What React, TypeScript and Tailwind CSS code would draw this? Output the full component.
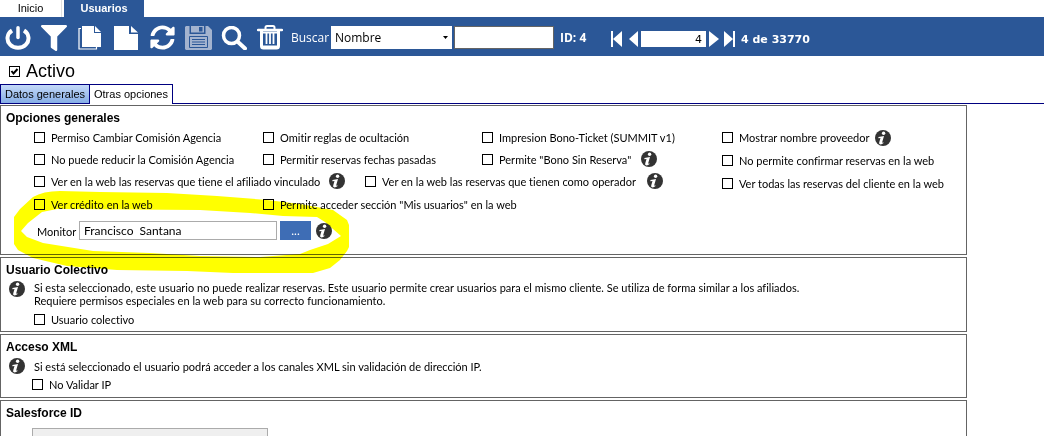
import React, { useId, useState } from 'react';
import { FaFilter, FaSyncAlt } from 'react-icons/fa';

function PowerIcon() {
  return (
    <svg width="26" height="24" viewBox="0 0 26 24" fill="none" stroke="currentColor">
      <path d="M7 4.500a10.500 9.500 0 1 0 12 0" strokeWidth="4" />
      <path d="M13 1.800v9.700" strokeWidth="3.500" strokeLinecap="round" />
    </svg>
  );
}

function CopyIcon() {
  return (
    <svg width="24" height="24" viewBox="0 0 24 24" fill="currentColor">
      <path d="M4 0h12v7h7v14H4z" />
      <path d="M17 0l6 6h-6z" />
      <path d="M3 2.500H1V23h17.500v-2" fill="none" stroke="currentColor" strokeWidth="1.200" />
    </svg>
  );
}

function FileIcon() {
  return (
    <svg width="24" height="24" viewBox="0 0 24 24" fill="currentColor">
      <path d="M0 0h15v8h9v16H0z" />
      <path d="M17 0l7 6.500h-7z" />
    </svg>
  );
}

function SaveIcon() {
  return (
    <svg width="27" height="24" viewBox="0 0 27 24" fill="currentColor">
      <path d="M1 0h3.500v8h16V0H23l4 4v19l-1 1H1l-1-1V1z" />
      <path fillRule="evenodd" d="M6 0h13v6.500H6zM14 1v4.500h3.500V1z" />
      <path
        d="M4.500 10.500h18v11h-18zM7 13.500h13M7 16h13M7 18.500h13"
        fill="none"
        stroke="#2b5797"
        strokeWidth="1"
      />
    </svg>
  );
}

function SearchIcon() {
  return (
    <svg width="26" height="24" viewBox="0 0 26 24" fill="none" stroke="currentColor">
      <circle cx="10.500" cy="9.500" r="8" strokeWidth="3.500" />
      <path d="M17 16l7 6.500" strokeWidth="4" strokeLinecap="round" />
    </svg>
  );
}

function TrashIcon() {
  return (
    <svg width="26" height="25" viewBox="0 0 26 25" fill="none" stroke="currentColor">
      <path d="M8.500 4V2.500Q8.500 1 10 1h6q1.500 0 1.500 1.500V4" strokeWidth="2" />
      <path d="M1 5h24" strokeWidth="2.500" strokeLinecap="round" />
      <path d="M4.500 6v15q0 2 2 2h13q2 0 2-2V6" strokeWidth="3" />
      <path d="M5 7.500h16" strokeWidth="2" />
      <path d="M9.500 8v11M13 8v11M16.500 8v11" strokeWidth="1.800" />
      <path d="M5 22h16" strokeWidth="3" />
    </svg>
  );
}

function InfoIcon() {
  return (
    <svg width="16" height="16" viewBox="0 0 16 16" className="shrink-0">
      <circle cx="8" cy="8" r="8" fill="#333" />
      <circle cx="8.600" cy="3.200" r="1.700" fill="#fff" />
      <path d="M3.500 7L9 6 7.200 12.300q-.2.900 1.300 0l-.2 1q-1.800 1.500-3.300 1-1.200-.3-.8-1.800l1.300-4.400-2.200.1z" fill="#fff" />
    </svg>
  );
}

type CheckProps = {
  label: string;
  initial?: boolean;
  large?: boolean;
};

function Check({ label, initial = false, large = false }: CheckProps) {
  const id = useId();
  const [checked, setChecked] = useState(initial);

  return (
    <div className="flex items-center gap-[6px]">
      <span className="relative flex shrink-0">
        <input
          id={id}
          type="checkbox"
          checked={checked}
          onChange={e => setChecked(e.target.checked)}
          className="h-[11px] w-[11px] shrink-0 appearance-none border border-black bg-white"
        />
        {checked && (
          <svg width="11" height="11" viewBox="0 0 11 11" className="pointer-events-none absolute inset-0">
            <path d="M2.500 5l2 2.500L8.500 3" fill="none" stroke="#000" strokeWidth="2" />
          </svg>
        )}
      </span>
      <label
        htmlFor={id}
        className={large ? "font-['Liberation_Sans',Arial,sans-serif] text-[18px] leading-5" : 'whitespace-nowrap'}
      >
        {label}
      </label>
    </div>
  );
}

type PanelProps = {
  title: string;
  children: React.ReactNode;
};

function Panel({ title, children }: PanelProps) {
  return (
    <section className="border border-[#646464]">
      <h2 className="pt-1 pl-[5px] font-['Liberation_Sans',Arial,sans-serif] text-[12px] leading-4 font-bold">
        {title}
      </h2>
      {children}
    </section>
  );
}

const tools = [
  { name: 'Salir', icon: <PowerIcon /> },
  { name: 'Filtrar', icon: <FaFilter size={26} /> },
  { name: 'Copiar', icon: <CopyIcon /> },
  { name: 'Nuevo', icon: <FileIcon /> },
  { name: 'Actualizar', icon: <FaSyncAlt size={25} /> },
  { name: 'Guardar', icon: <SaveIcon />, disabled: true },
  { name: 'Buscar', icon: <SearchIcon /> },
  { name: 'Eliminar', icon: <TrashIcon /> },
];

function Toolbar() {
  return (
    <div className="flex h-[39px] items-center bg-[#2b5797] pt-[2px] font-['Open_Sans',sans-serif] text-[12px] text-white">
      {tools.map(tool => (
        <button
          key={tool.name}
          type="button"
          aria-label={tool.name}
          disabled={tool.disabled}
          className="flex h-full w-9 items-center justify-center disabled:text-[#a3b3cf]"
        >
          {tool.icon}
        </button>
      ))}
      <label htmlFor="campo" className="ml-[3px] w-10">Buscar</label>
      <div className="relative">
        <select
          id="campo"
          className="block h-[23px] w-[121px] appearance-none bg-white pl-1 text-[12px] text-black"
        >
          <option>Nombre</option>
        </select>
        <svg width="5" height="3" viewBox="0 0 5 3" className="pointer-events-none absolute top-[10px] right-1">
          <path d="M0 0h5L2.500 3z" fill="#000" />
        </svg>
      </div>
      <input
        type="text"
        aria-label="Texto a buscar"
        className="ml-[2px] h-[23px] w-[100px] border border-[#646464] bg-white px-1 text-black"
      />
      <span className="ml-[6px] w-[51px] font-bold">ID: 4</span>
      <div className="flex items-center pt-[3px] font-['DejaVu_Sans',sans-serif] text-[11px]">
        <button type="button" aria-label="Primero">
          <svg width="12" height="16" viewBox="0 0 12 16" fill="currentColor">
            <path d="M0 0h2v16H0zM11 0v16L2 8z" />
          </svg>
        </button>
        <button type="button" aria-label="Anterior" className="ml-[6px]">
          <svg width="9" height="16" viewBox="0 0 9 16" fill="currentColor">
            <path d="M9 0v16L0 8z" />
          </svg>
        </button>
        <input
          type="text"
          aria-label="Registro"
          defaultValue="4"
          className="ml-[3px] h-4 w-[65px] bg-white pr-1 text-right text-black"
        />
        <button type="button" aria-label="Siguiente" className="ml-[3px]">
          <svg width="10" height="16" viewBox="0 0 10 16" fill="currentColor">
            <path d="M0 0v16l10-8z" />
          </svg>
        </button>
        <button type="button" aria-label="Último" className="ml-[5px]">
          <svg width="12" height="16" viewBox="0 0 12 16" fill="currentColor">
            <path d="M0 0v16l9-8zM9 0h2v16H9z" />
          </svg>
        </button>
        <span className="ml-[5px] font-bold">4 de 33770</span>
      </div>
    </div>
  );
}

// Yellow marker stroke drawn over the "Monitor" field
function Highlight() {
  return (
    <svg
      width="350"
      height="280"
      viewBox="0 0 350 280"
      className="pointer-events-none absolute top-0 left-0 mix-blend-multiply"
    >
      <path
        fill="#ff0"
        fillRule="evenodd"
        d="M33 197Q43 191 60 191L100 192 167 193 217 196 267 200 300 204 333 210 347 220 349 225V247L347 251 340 260 330 268 313 273 233 273 187 271 117 270 67 266 33 258 18 250 14 244V217L20 209zM21 231L27 237 43 243 93 251 150 253 200 256 260 257 300 254 310 250 328 244 341 236 325 222 317 217 283 216 250 213 200 210 57 209 42 212 28 223z"
      />
    </svg>
  );
}

export default function App() {
  return (
    <div className="relative isolate h-screen overflow-hidden bg-white font-[Lato,Arial,sans-serif] text-[11px] leading-[13px] text-black [font-variant-ligatures:none]">
      <nav className="flex h-[17px] font-['Liberation_Sans',Arial,sans-serif] text-[11px]">
        <button type="button" className="w-[62px] border-r border-[#e0e0e0]">Inicio</button>
        <button type="button" className="ml-[2px] w-20 bg-[#2b5797] font-bold text-white">Usuarios</button>
      </nav>

      <Toolbar />

      <div className="flex h-7 items-center pt-[2px] pl-[9px]">
        <Check label="Activo" initial large />
      </div>

      {/* Tabs */}
      <div className="flex h-5 font-['Liberation_Sans',Arial,sans-serif]" role="tablist">
        <button
          type="button"
          role="tab"
          aria-selected="false"
          className="w-[90px] border border-[#000080] bg-linear-to-b from-[#c4d9f8] to-[#86aee6]"
        >
          Datos generales
        </button>
        <button
          type="button"
          role="tab"
          aria-selected="true"
          className="w-[83px] border-t border-r border-[#000080] bg-white"
        >
          Otras opciones
        </button>
        <div className="flex-1 border-b border-[#000080]" />
      </div>

      <main className="mt-px mr-[77px] flex flex-col gap-[2px]">
        <Panel title="Opciones generales">
          <div className="flex pb-[14px] pl-[33px]">
            <div className="w-[688px] shrink-0">
              <div className="grid grid-cols-[229px_219px_1fr]">
                <div className="flex h-[22px] items-center"><Check label="Permiso Cambiar Comisión Agencia" /></div>
                <div className="flex h-[22px] items-center"><Check label="Omitir reglas de ocultación" /></div>
                <div className="flex h-[22px] items-center"><Check label="Impresion Bono-Ticket (SUMMIT v1)" /></div>
                <div className="flex h-[22px] items-center"><Check label="No puede reducir la Comisión Agencia" /></div>
                <div className="flex h-[22px] items-center"><Check label="Permitir reservas fechas pasadas" /></div>
                <div className="flex h-[22px] items-center gap-[10px]">
                  <Check label={'Permite "Bono Sin Reserva"'} />
                  <InfoIcon />
                </div>
              </div>
              <div className="flex h-[22px] items-center">
                <div className="flex w-[331px] items-center gap-[9px]">
                  <Check label="Ver en la web las reservas que tiene el afiliado vinculado" />
                  <InfoIcon />
                </div>
                <div className="flex items-center gap-[11px]">
                  <Check label="Ver en la web las reservas que tienen como operador" />
                  <InfoIcon />
                </div>
              </div>
              <div className="grid h-[25px] grid-cols-[229px_1fr] items-center">
                <Check label="Ver crédito en la web" />
                <Check label={'Permite acceder sección "Mis usuarios" en la web'} />
              </div>
              <div className="mt-1 flex items-center pl-[3px]">
                <label htmlFor="monitor" className="w-[42px] pt-[2px]">Monitor</label>
                <input
                  id="monitor"
                  type="text"
                  defaultValue="Francisco  Santana"
                  className="h-[19px] w-[198px] border border-[#ababab] bg-white px-1 text-[12px]"
                />
                <button type="button" className="mr-[5px] ml-[3px] h-[19px] w-[31px] bg-[#3e6db5] text-[12px] text-white">
                  ...
                </button>
                <InfoIcon />
              </div>
            </div>
            <div>
              <div className="flex h-[23px] items-center gap-[5px]">
                <Check label="Mostrar nombre proveedor" />
                <InfoIcon />
              </div>
              <div className="flex h-[23px] items-center"><Check label="No permite confirmar reservas en la web" /></div>
              <div className="flex h-[23px] items-center"><Check label="Ver todas las reservas del cliente en la web" /></div>
            </div>
          </div>
        </Panel>

        <Panel title="Usuario Colectivo">
          <div className="flex gap-[9px] pt-[3px] pl-2">
            <InfoIcon />
            <p>
              Si esta seleccionado, este usuario no puede realizar reservas. Este usuario permite crear usuarios para el mismo cliente. Se utiliza de forma similar a los afiliados.
              <br />
              Requiere permisos especiales en la web para su correcto funcionamiento.
            </p>
          </div>
          <div className="pt-[6px] pb-[5px] pl-[33px]">
            <Check label="Usuario colectivo" />
          </div>
        </Panel>

        <Panel title="Acceso XML">
          <div className="flex items-center gap-[9px] pt-[3px] pl-2">
            <InfoIcon />
            <p>Si está seleccionado el usuario podrá acceder a los canales XML sin validación de dirección IP.</p>
          </div>
          <div className="pt-1 pb-[6px] pl-[31px]">
            <Check label="No Validar IP" />
          </div>
        </Panel>

        <Panel title="Salesforce ID">
          <div className="pt-[7px] pb-3 pl-[31px]">
            <input
              type="text"
              aria-label="Salesforce ID"
              readOnly
              className="block h-[19px] w-[236px] border border-[#ababab] bg-[#efefef] px-1"
            />
          </div>
        </Panel>
      </main>

      <Highlight />
    </div>
  );
}
